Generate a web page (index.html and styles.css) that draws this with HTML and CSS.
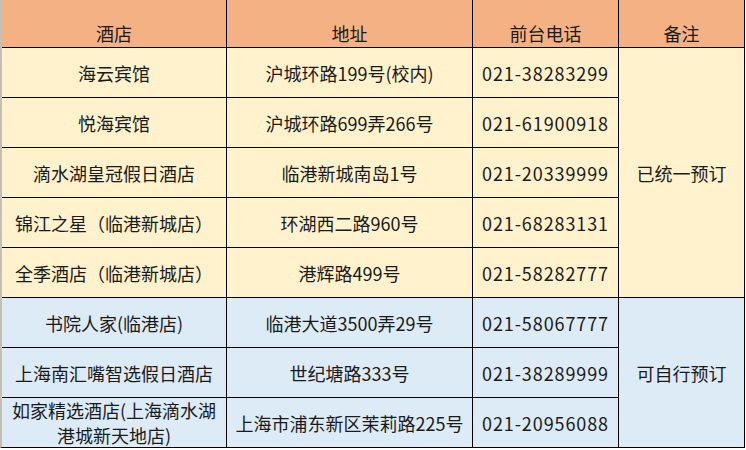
FILE: index.html
```html
<!DOCTYPE html>
<html lang="zh-CN">
<head>
<meta charset="utf-8">
<title>酒店列表</title>
<link rel="stylesheet" href="styles.css">
</head>
<body>
<div class="sheet">
  <div class="grid">
    <div class="cell head">酒店</div>
    <div class="cell head">地址</div>
    <div class="cell head">前台电话</div>
    <div class="cell head">备注</div>

    <div class="cell remark remark-a">已统一预订</div>
    <div class="cell remark remark-b">可自行预订</div>

    <div class="cell y">海云宾馆</div>
    <div class="cell y">沪城环路199号(校内)</div>
    <div class="cell y num">021-38283299</div>

    <div class="cell y">悦海宾馆</div>
    <div class="cell y">沪城环路699弄266号</div>
    <div class="cell y num">021-61900918</div>

    <div class="cell y">滴水湖皇冠假日酒店</div>
    <div class="cell y">临港新城南岛1号</div>
    <div class="cell y num">021-20339999</div>

    <div class="cell y">锦江之星（临港新城店）</div>
    <div class="cell y">环湖西二路960号</div>
    <div class="cell y num">021-68283131</div>

    <div class="cell y">全季酒店（临港新城店）</div>
    <div class="cell y">港辉路499号</div>
    <div class="cell y num">021-58282777</div>

    <div class="cell b">书院人家(临港店)</div>
    <div class="cell b">临港大道3500弄29号</div>
    <div class="cell b num">021-58067777</div>

    <div class="cell b">上海南汇嘴智选假日酒店</div>
    <div class="cell b">世纪塘路333号</div>
    <div class="cell b num">021-38289999</div>

    <div class="cell b two">如家精选酒店(上海滴水湖<br>港城新天地店)</div>
    <div class="cell b">上海市浦东新区茉莉路225号</div>
    <div class="cell b num">021-20956088</div>
  </div>
</div>
</body>
</html>
```

FILE: styles.css
```css
html, body {
  margin: 0;
  padding: 0;
  background: #ffffff;
}

.sheet {
  width: 746px;
  height: 450px;
  overflow: hidden;
  display: flex;
}

.grid {
  display: grid;
  grid-template-columns: 224px 245px 145px 125px;
  grid-template-rows: 47px repeat(8, 49px);
  gap: 1px;
  background: #000000;
  border-left: 2px solid #c4c0b6;
  border-right: 1px solid #000000;
  border-bottom: 1px solid #000000;
  align-self: flex-start;
  font-family: "Noto Sans CJK SC", "Noto Sans", sans-serif;
  font-size: 18px;
  color: #1a1a1a;
}

.cell {
  display: flex;
  align-items: center;
  justify-content: center;
  text-align: center;
  line-height: 24px;
  white-space: nowrap;
}

.head {
  background: #f4b183;
  align-items: flex-end;
  padding-bottom: 2px;
}

.y {
  background: #fff2cc;
}

.b {
  background: #ddebf7;
}

.num {
  letter-spacing: 0.9px;
}

.two {
  line-height: 25px;
  white-space: normal;
}

.remark {
  grid-column: 4;
}

.remark-a {
  grid-row: 2 / span 5;
  background: #fff2cc;
}

.remark-b {
  grid-row: 7 / span 3;
  background: #ddebf7;
}
```
